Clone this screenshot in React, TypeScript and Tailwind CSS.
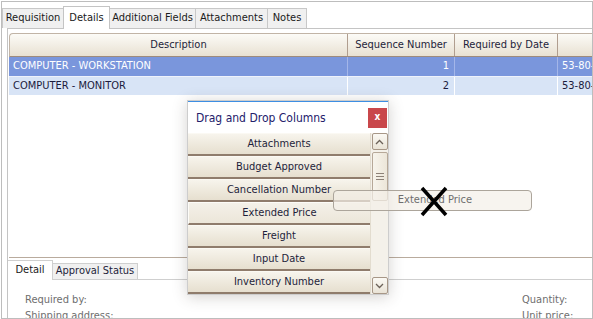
import React from "react";

const FONT = '"DejaVu Sans Condensed", "Liberation Sans", sans-serif';

const topTabs = [
  { label: "Requisition", w: 62, active: false },
  { label: "Details", w: 47, active: true },
  { label: "Additional Fields", w: 87, active: false },
  { label: "Attachments", w: 73, active: false },
  { label: "Notes", w: 40, active: false },
];

const items = [
  "Attachments",
  "Budget Approved",
  "Cancellation Number",
  "Extended Price",
  "Freight",
  "Input Date",
  "Inventory Number",
];

function TopTabs() {
  return (
    <div className="shrink-0 flex items-end h-[26px]">
      {topTabs.map((t, i) =>
        t.active ? (
          <div
            key={t.label}
            style={{ width: t.w }}
            className="relative z-10 -mb-[1px] h-[23px] bg-white border border-b-0 border-[#c4c4c4] flex items-start justify-center pt-[3px] text-[11px] text-[#1a1a1a] -ml-[1px]"
          >
            {t.label}
          </div>
        ) : (
          <div
            key={t.label}
            style={{ width: t.w }}
            className={
              "h-[20px] bg-[#f0f0f0] border border-b-0 border-[#c8c8c8] flex items-center justify-center text-[11px] text-[#1a1a1a] " +
              (i === 0 ? "" : "-ml-[1px]")
            }
          >
            {t.label}
          </div>
        )
      )}
    </div>
  );
}

function Grid() {
  return (
    <div className="h-[225px] border-b border-[#b9ab9d] flex flex-col bg-white overflow-hidden">
      <div className="shrink-0 flex h-[24px] rounded-tl-[4px] border-l border-t border-[#c1b4a6] border-b border-b-[#9e8b7c] bg-gradient-to-b from-[#fcfbf7] to-[#e8e1d2] text-[11px] text-[#1e1e3a]">
        <div className="shrink-0 w-[338px] flex items-center justify-center border-r border-[#b09e8f]">Description</div>
        <div className="shrink-0 w-[107px] flex items-center justify-center border-r border-[#b09e8f]">Sequence Number</div>
        <div className="shrink-0 w-[103px] flex items-center justify-center border-r border-[#b09e8f]">Required by Date</div>
        <div className="flex-1"></div>
      </div>
      <div className="shrink-0 flex h-[19px] bg-[#7a96dc] text-white text-[11px] whitespace-nowrap">
        <div className="shrink-0 w-[339px] flex items-center pl-[4px] border-r border-[#a4b6e9]">COMPUTER - WORKSTATION</div>
        <div className="shrink-0 w-[107px] flex items-center justify-end pr-[5px] border-r border-[#a4b6e9]">1</div>
        <div className="shrink-0 w-[103px] border-r border-[#a4b6e9]"></div>
        <div className="flex-1 min-w-0 overflow-hidden flex items-center pl-[4px]">53-80-</div>
      </div>
      <div className="shrink-0 flex h-[19px] bg-[#d8e4f6] text-[#1b1b3d] text-[11px] border-t border-[#eef2fb] whitespace-nowrap">
        <div className="shrink-0 w-[339px] flex items-center pl-[4px] border-r border-white">COMPUTER - MONITOR</div>
        <div className="shrink-0 w-[107px] flex items-center justify-end pr-[5px] border-r border-white">2</div>
        <div className="shrink-0 w-[103px] border-r border-white"></div>
        <div className="flex-1 min-w-0 overflow-hidden flex items-center pl-[4px]">53-80-</div>
      </div>
      <div className="flex-1"></div>
    </div>
  );
}

function Chevron({ up }: { up: boolean }) {
  return (
    <svg width="9" height="6" viewBox="0 0 9 6">
      <path
        d={up ? "M1 5 L4.5 1.5 L8 5" : "M1 1 L4.5 4.5 L8 1"}
        fill="none"
        stroke="#6b6158"
        strokeWidth="1.3"
      />
    </svg>
  );
}

function Popup() {
  return (
    <div className="absolute left-[187px] top-[100px] w-[202px] border border-[#cdcdcd] bg-white shadow-[0_2px_14px_rgba(60,50,40,0.22)]">
      <div className="h-[32px] border-t border-[#3d8ee3] bg-white flex items-start justify-between">
        <div className="pl-[8px] pt-[7px] text-[12px] text-[#23206a]">Drag and Drop Columns</div>
        <div className="mt-[6px] mr-[1px] w-[19px] h-[20px] bg-[#c9474b] flex items-center justify-center text-white text-[10px] font-bold leading-none pb-[2px]">
          x
        </div>
      </div>
      <div className="flex">
        <div className="w-[182px] flex flex-col">
          {items.map((it) => (
            <div
              key={it}
              className={
                "h-[23px] border-b-2 border-[#8f7c6c] flex items-center justify-center text-[11px] text-[#1e1e3a] " +
                (it === "Extended Price"
                  ? "bg-gradient-to-b from-[#f4f1e9] to-[#ece6d9] border-l border-l-[#fdfcf8] border-t border-t-[#fdfcf8]"
                  : "bg-gradient-to-b from-[#f7f4ec] to-[#e6dfcf] border-t border-t-[#fbf9f3]")
              }
            >
              {it}
            </div>
          ))}
        </div>
        <div className="w-[18px] bg-[#f4f1ea] border-l border-[#e2dccf] flex flex-col items-center">
          <div className="w-[16px] h-[17px] rounded-[2px] border border-[#a79787] bg-gradient-to-b from-[#fbf9f4] to-[#e9e3d6] flex items-center justify-center">
            <Chevron up={true} />
          </div>
          <div className="mt-[2px] w-[16px] h-[49px] rounded-[2px] border border-[#b6a898] bg-gradient-to-r from-[#f7f4ec] to-[#ece6d9] flex flex-col items-center justify-center gap-[2px]">
            <div className="w-[8px] h-[1px] bg-[#8c8177]"></div>
            <div className="w-[8px] h-[1px] bg-[#8c8177]"></div>
            <div className="w-[8px] h-[1px] bg-[#8c8177]"></div>
          </div>
          <div className="flex-1"></div>
          <div className="w-[16px] h-[17px] rounded-[2px] border border-[#a79787] bg-gradient-to-b from-[#fbf9f4] to-[#e9e3d6] flex items-center justify-center">
            <Chevron up={false} />
          </div>
        </div>
      </div>
    </div>
  );
}

export default function App() {
  return (
    <div
      className="relative w-[593px] h-[319px] bg-white overflow-hidden"
      style={{ fontFamily: FONT }}
    >
      <div className="ml-[1px] mt-[1px] w-[592px] h-[318px] border border-[#bdbdbd] flex flex-col overflow-hidden">
        <TopTabs />
        <div className="shrink-0 ml-[5px] h-[230px] border-l border-t border-[#c4c4c4] pl-[1px] pt-[4px]">
          <Grid />
        </div>
        <div className="ml-[5px] flex-1 min-h-0 overflow-hidden border-l border-[#c4c4c4] flex flex-col pt-[2px]">
          <div className="shrink-0 flex items-end h-[20px] border-b border-[#cfcfcf]">
            <div className="relative z-10 -mb-[1px] w-[45px] h-[20px] bg-white border-r border-t border-[#cfcfcf] flex items-center justify-center text-[11px] text-[#1a1a1a]">
              Detail
            </div>
            <div className="w-[85px] h-[16px] bg-[#f0f0f0] border-r border-t border-[#cfcfcf] flex items-center justify-center text-[11px] text-[#1e1e3a]">
              Approval Status
            </div>
          </div>
          <div className="shrink-0 flex justify-between pt-[12px] text-[11px] text-[#6e6e6e] leading-[16px]">
            <div className="pl-[17px] flex flex-col">
              <span>Required by:</span>
              <span>Shipping address:</span>
            </div>
            <div className="w-[70px] flex flex-col">
              <span>Quantity:</span>
              <span>Unit price:</span>
            </div>
          </div>
        </div>
      </div>

      <Popup />

      <div className="absolute left-[333px] top-[190px] w-[199px] h-[21px] rounded-[4px] border border-[#aca59b] bg-[#f3f0e8]/70 flex items-center justify-center pl-[5px] text-[11px] text-[#6e6e6e]">
        Extended Price
      </div>
      <svg className="absolute left-[419px] top-[186px]" width="30" height="31" viewBox="0 0 30 31">
        <path d="M3 2 L27 29 M27 2 L3 29" stroke="#000" strokeWidth="3.5" />
      </svg>
    </div>
  );
}
